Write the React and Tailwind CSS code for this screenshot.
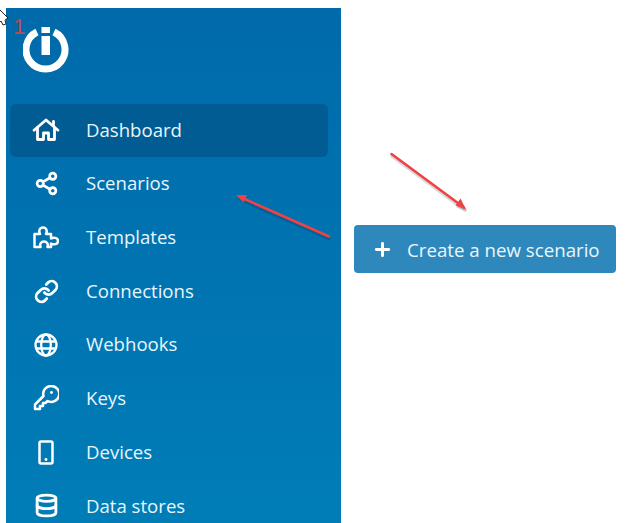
import React from "react";
import { Share2, Link, Database, Plus } from "lucide-react";

function HomeIcon() {
  return (
    <svg width="28" height="24" viewBox="0 0 28 24" fill="none" stroke="currentColor" strokeWidth="2.800" strokeLinejoin="round" strokeLinecap="round">
      <path d="M2 12.200 14 2l12 10.200" />
      <path d="M21.500 3.500v4" />
      <path d="M5.500 10v11.500h6V15h5v6.500h6V10" />
    </svg>
  );
}

function PuzzleIcon() {
  return (
    <svg width="26" height="23" viewBox="0 0 26 23" fill="none" stroke="currentColor" strokeWidth="2.500" strokeLinejoin="round">
      <path d="M1.500 8H7C5.500 5 6.500 1.500 10 1.500S14.500 5 13 8h5v4.500c2.500-1.500 7-1 7 2.500s-4.500 4-7 2.500V21h-3.500c1-3-.5-5.500-3.500-5.500S6.500 18 7.500 21h-6z" />
    </svg>
  );
}

function GlobeIcon() {
  return (
    <svg width="24" height="24" viewBox="0 0 24 24" fill="none" stroke="currentColor" strokeWidth="2.300">
      <circle cx="12" cy="12" r="10.500" />
      <ellipse cx="12" cy="12" rx="4.800" ry="10.500" />
      <path d="M2.500 8.500h19M2.500 15.500h19" />
    </svg>
  );
}

function KeyIcon() {
  return (
    <svg width="26" height="26" viewBox="0 0 26 26" fill="none" stroke="currentColor" strokeWidth="2.500" strokeLinejoin="round">
      <path d="M10.500 11 2 19.500V24h5v-3h3v-3h2.500l2-2A8 8 0 1 0 10.500 11z" />
      <circle cx="18.500" cy="7.500" r="1.400" fill="currentColor" stroke="none" />
    </svg>
  );
}

function PhoneIcon() {
  return (
    <svg width="16" height="25" viewBox="0 0 16 25" fill="none" stroke="currentColor" strokeWidth="2.500" strokeLinejoin="round">
      <rect x="1.500" y="1.500" width="13" height="22" rx="1.500" />
      <circle cx="8" cy="19.500" r="1.400" fill="currentColor" stroke="none" />
    </svg>
  );
}

function Logo() {
  return (
    <svg width="46" height="46" viewBox="0 0 46 46" fill="none">
      <path d="M14 5A19.500 19.500 0 1 0 31 5" stroke="#fff" strokeWidth="7" />
      <rect x="18.500" y="0" width="8.500" height="6" fill="#fff" />
      <rect x="18.500" y="9" width="8.500" height="19" fill="#fff" />
    </svg>
  );
}

const items = [
  ["Dashboard", <HomeIcon />],
  ["Scenarios", <Share2 size={25} strokeWidth={2.600} />],
  ["Templates", <PuzzleIcon />],
  ["Connections", <Link size={25} strokeWidth={2.700} />],
  ["Webhooks", <GlobeIcon />],
  ["Keys", <KeyIcon />],
  ["Devices", <PhoneIcon />],
  ["Data stores", <Database size={25} strokeWidth={2.700} />],
];

export default function App() {
  return (
    <div className="relative flex h-[523px] w-[627px] overflow-hidden bg-white font-['Open_Sans',sans-serif]">
      <aside className="ml-[6px] mt-[8px] flex h-[515px] w-[335px] shrink-0 flex-col bg-gradient-to-b from-[#006aaa] to-[#007db7] px-1">
        <div className="ml-[13px] mt-[19px] h-[76.700px] shrink-0">
          <Logo />
        </div>
        <nav className="flex w-[318px] flex-col">
          {items.map(([label, icon], i) => (
            <div
              key={label}
              className={`flex h-[53.700px] shrink-0 items-center rounded-md pb-px pl-[20px] text-[#e8f6fd] ${i === 0 ? "bg-[#005c92]" : ""}`}
            >
              <span className="flex w-[32px] items-center justify-center text-white">{icon}</span>
              <span className="ml-[24px] text-[18.600px] leading-none">{label}</span>
            </div>
          ))}
        </nav>
      </aside>
      <main className="ml-[13px] mt-[225px]">
        <button className="flex h-[48px] w-[262px] items-center rounded bg-[#2e88bb] pl-[18px] text-[18.700px] text-[#eaf6fc]">
          <Plus size={21} strokeWidth={3.400} className="text-white" />
          <span className="ml-[14px] pt-[2px]">Create a new scenario</span>
        </button>
      </main>

      <span className="absolute left-[13px] top-[16px] font-['Liberation_Sans',sans-serif] text-[22px] leading-none text-[#c9444c]">1</span>
      <svg className="absolute left-0 top-[8px]" width="10" height="20" viewBox="0 0 10 20" fill="#fff" stroke="#222" strokeWidth="1">
        <path d="M-1 1 8 10 5 12 6 16 3 17 1 13-1 15z" />
      </svg>
      <svg className="pointer-events-none absolute left-0 top-0" width="627" height="523" fill="none">
        <g stroke="#000" strokeOpacity="0.15" strokeWidth="3.500" strokeLinecap="round">
          <path d="M392 156 465 210" />
          <path d="M329 238.500 240 199" />
        </g>
        <path d="M467 211.500 456 207.500 461 200.500z" fill="#000" fillOpacity="0.15" />
        <g stroke="#ef4146" strokeWidth="2.600" strokeLinecap="round">
          <path d="M391.500 154 464 207.500" />
          <path d="M329 236.500 240 197" />
        </g>
        <path d="M466 209.500 455.500 205.500 460.500 198.500z" fill="#ef4146" />
        <path d="M236 195 247 195 243.500 202.500z" fill="#ef4146" />
      </svg>
    </div>
  );
}
